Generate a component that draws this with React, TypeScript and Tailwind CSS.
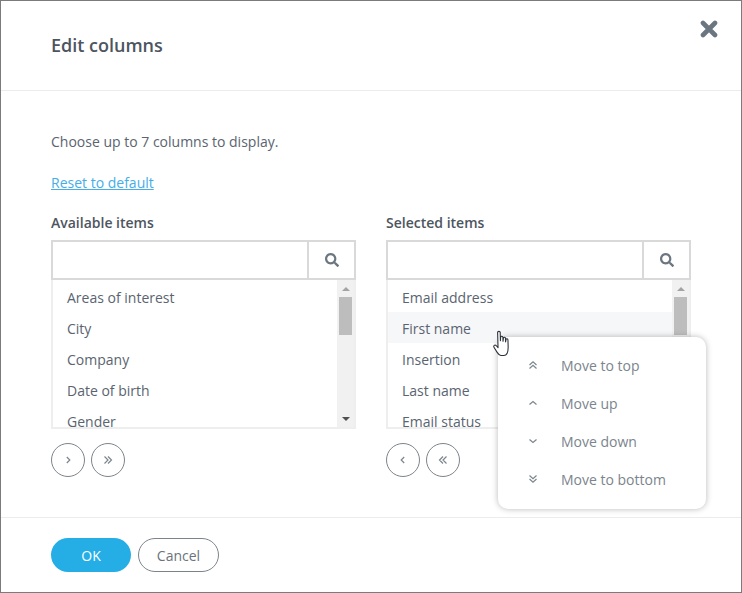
import { FaSearch } from "react-icons/fa";

const font = { fontFamily: '"Open Sans", sans-serif' };

function Chev({ kind, className }: { kind: "left" | "right" | "dleft" | "dright" | "up" | "down" | "dup" | "ddown"; className?: string }) {
  const paths: Record<string, string> = {
    left: "M7.2 3 L4.2 6 L7.2 9",
    right: "M4.8 3 L7.8 6 L4.8 9",
    dleft: "M6 2.5 L2.5 6 L6 9.5 M9.5 2.5 L6 6 L9.5 9.5",
    dright: "M2.5 2.5 L6 6 L2.5 9.5 M6 2.5 L9.5 6 L6 9.5",
    up: "M2.5 7.5 L6 4.5 L9.5 7.5",
    down: "M2.5 4.5 L6 7.5 L9.5 4.5",
    dup: "M2.5 6 L6 2.8 L9.5 6 M2.5 9.5 L6 6.3 L9.5 9.5",
    ddown: "M2.5 2.5 L6 5.7 L9.5 2.5 M2.5 6 L6 9.2 L9.5 6",
  };
  return (
    <svg width="12" height="12" viewBox="0 0 12 12" fill="none" stroke="#7b858d" strokeWidth="1.2" className={className}>
      <path d={paths[kind]} />
    </svg>
  );
}

function Round({ kind }: { kind: "left" | "right" | "dleft" | "dright" }) {
  return (
    <button className="flex h-[34px] w-[34px] items-center justify-center rounded-full border border-[#7c848b] bg-white">
      <Chev kind={kind} />
    </button>
  );
}

function ListBox({
  title,
  items,
  hover,
  buttons,
}: {
  title: string;
  items: string[];
  hover?: string;
  buttons: ("left" | "right" | "dleft" | "dright")[];
}) {
  return (
    <div className="w-[305px]">
      <div className="mb-[8px] h-[19px] text-[14px] leading-[19px] font-semibold text-[#4d5560]">{title}</div>
      <div className="flex h-[40px] border-2 border-[#d9d9d9]">
        <div className="flex-1" />
        <div className="flex w-[47px] items-center justify-center border-l-2 border-[#d9d9d9]">
          <FaSearch className="text-[14px] text-[#6b7680]" />
        </div>
      </div>
      <div className="flex h-[149px] border-2 border-t-0 border-[#eeeeee]">
        <div className="flex-1 overflow-hidden pt-[1px]">
          {items.map((it) => (
            <div
              key={it}
              className={`h-[31px] pl-[14px] text-[14px] leading-[33px] text-[#5a6470] ${it === hover ? "bg-[#f6f7f9]" : ""}`}
            >
              {it}
            </div>
          ))}
        </div>
        <div className="flex w-[17px] flex-col items-center bg-[#f1f1f1]">
          <div className="flex h-[17px] w-full items-center justify-center">
            <div className="h-0 w-0 border-x-[4px] border-b-[4px] border-x-transparent border-b-[#a3a3a3]" />
          </div>
          <div className="h-[38px] w-[13px] bg-[#bdbdbd]" />
          <div className="flex-1" />
          <div className="flex h-[17px] w-full items-center justify-center">
            <div className="h-0 w-0 border-x-[4px] border-t-[4px] border-x-transparent border-t-[#505050]" />
          </div>
        </div>
      </div>
      <div className="mt-[14px] flex gap-[6px]">
        {buttons.map((b) => (
          <Round key={b} kind={b} />
        ))}
      </div>
    </div>
  );
}

export default function App() {
  return (
    <div style={font} className="relative flex h-[593px] w-[742px] flex-col overflow-hidden border border-[#7b7b7b] bg-white">
      <div className="flex h-[90px] shrink-0 items-center justify-between border-b border-[#ececec] pl-[50px]">
        <div className="text-[18px] font-semibold text-[#4d5560]">Edit columns</div>
      </div>
      <svg width="18" height="18" viewBox="0 0 18 18" className="absolute top-[19px] left-[699px]">
        <path d="M3 3 L15 15 M15 3 L3 15" stroke="#6b7680" strokeWidth="4.6" strokeLinecap="round" />
      </svg>
      <div className="h-[426px] shrink-0 pl-[50px]">
        <p className="mt-[41px] h-[19px] text-[14px] leading-[19px] text-[#5a6470]">Choose up to 7 columns to display.</p>
        <a className="mt-[22px] block h-[19px] text-[14px] leading-[19px] text-[#45ade8] underline">Reset to default</a>
        <div className="mt-[21px] flex gap-[30px]">
          <ListBox
            title="Available items"
            items={["Areas of interest", "City", "Company", "Date of birth", "Gender"]}
            buttons={["right", "dright"]}
          />
          <ListBox
            title="Selected items"
            items={["Email address", "First name", "Insertion", "Last name", "Email status"]}
            hover="First name"
            buttons={["left", "dleft"]}
          />
        </div>
      </div>
      <div className="flex flex-1 items-start gap-[7px] border-t border-[#ececec] pt-[20px] pl-[50px]">
        <button className="h-[34px] w-[80px] rounded-full bg-[#25aee6] text-[14px] text-white">OK</button>
        <button className="h-[34px] w-[81px] rounded-full border border-[#7c848b] bg-white text-[14px] text-[#6a737c]">Cancel</button>
      </div>

      <div className="absolute top-[336px] left-[497px] w-[208px] rounded-[10px] bg-white pt-[9px] pb-[11px] shadow-[0_0_6px_rgba(0,0,0,0.28)]">
        {[
          ["dup", "Move to top"],
          ["up", "Move up"],
          ["down", "Move down"],
          ["ddown", "Move to bottom"],
        ].map(([k, t]) => (
          <div key={t} className="flex h-[38px] items-center pl-[29px] text-[14px] text-[#7b858d]">
            <Chev kind={k as "up"} className="mr-[22px]" />
            {t}
          </div>
        ))}
      </div>

      <svg width="22" height="28" viewBox="0 0 20 26" className="absolute top-[329px] left-[491px]">
        <path
          d="M5 2.2 C5 1 7.4 1 7.4 2.2 L7.6 10 L7.8 6.6 C8 5.6 9.8 5.6 9.9 6.8 L10 10.5 L10.4 7.4 C10.6 6.4 12.3 6.6 12.3 7.8 L12.4 11 L12.8 8.8 C13 7.8 14.6 8 14.6 9.2 L14.8 16 C14.8 20 13.5 23.6 10.8 23.6 L8 23.6 C6.4 23.6 5.6 22.4 4.6 20.8 L1.6 16 C0.8 14.8 2.4 13.2 3.6 14.4 L5.4 16.4 Z"
          fill="#fff"
          stroke="#2b2f36"
          strokeWidth="1"
          strokeLinejoin="round"
        />
      </svg>
    </div>
  );
}
